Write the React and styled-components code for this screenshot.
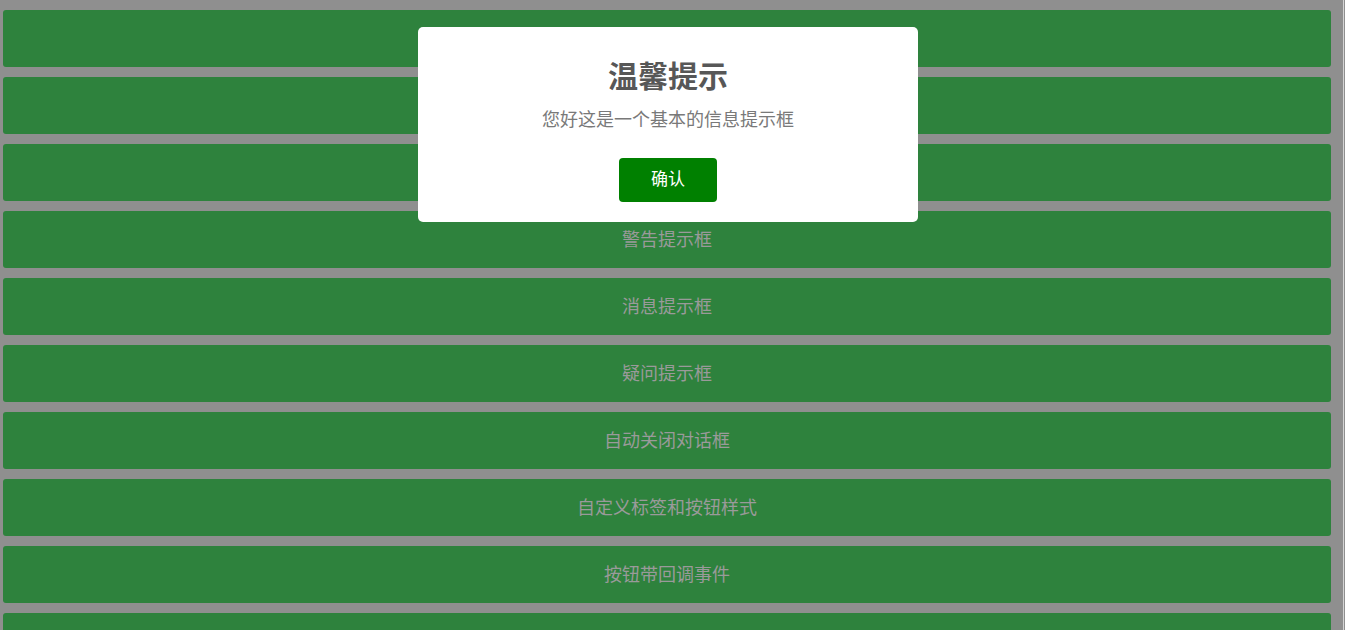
import React from 'react'
import styled, { createGlobalStyle } from 'styled-components'

const GlobalStyle = createGlobalStyle`
  html, body {
    margin: 0;
    padding: 0;
    background: #8f8f8f;
    font-family: "Noto Sans CJK SC", "Liberation Sans", sans-serif;
  }
`

const Page = styled.div`
  display: flex;
  background: #8f8f8f;
  overflow: hidden;
  height: 630px;
`

const List = styled.div`
  width: 1328px;
  padding: 10px 12px 0 3px;
  display: flex;
  flex-direction: column;
  gap: 10px;
  border-right: 1px solid #d4d4d4;
`

const Bar = styled.div`
  flex: none;
  height: 57px;
  box-sizing: border-box;
  padding-bottom: 4px;
  border-radius: 3px;
  background: #2e823d;
  color: #9a9a9a;
  font-size: 18px;
  display: flex;
  align-items: center;
  justify-content: center;
`

const Modal = styled.div`
  position: fixed;
  left: 418px;
  top: 27px;
  width: 500px;
  height: 195px;
  box-sizing: border-box;
  padding-top: 29px;
  background: #fff;
  border-radius: 5px;
  display: flex;
  flex-direction: column;
  align-items: center;
`

const Title = styled.h2`
  margin: 0;
  font-size: 30px;
  line-height: 36px;
  font-weight: 700;
  color: #575757;
`

const Text = styled.p`
  margin: 14px 0 0;
  font-size: 18px;
  line-height: 24px;
  color: #797979;
`

const ConfirmButton = styled.button`
  margin-top: 28px;
  width: 98px;
  height: 44px;
  padding: 0 0 5px;
  border: none;
  border-radius: 4px;
  background: #008000;
  color: #fff;
  font-family: inherit;
  font-size: 17px;
  cursor: pointer;
`

const items = [
  '基本信息提示框',
  '带标题的提示框',
  '成功提示框',
  '警告提示框',
  '消息提示框',
  '疑问提示框',
  '自动关闭对话框',
  '自定义标签和按钮样式',
  '按钮带回调事件',
  '带输入框的提示框',
]

const App = () => {
  return (
    <Page>
      <GlobalStyle />
      <List>
        {items.map((t) => (
          <Bar key={t}>{t}</Bar>
        ))}
      </List>
      <Modal>
        <Title>温馨提示</Title>
        <Text>您好这是一个基本的信息提示框</Text>
        <ConfirmButton>确认</ConfirmButton>
      </Modal>
    </Page>
  )
}

export default App
